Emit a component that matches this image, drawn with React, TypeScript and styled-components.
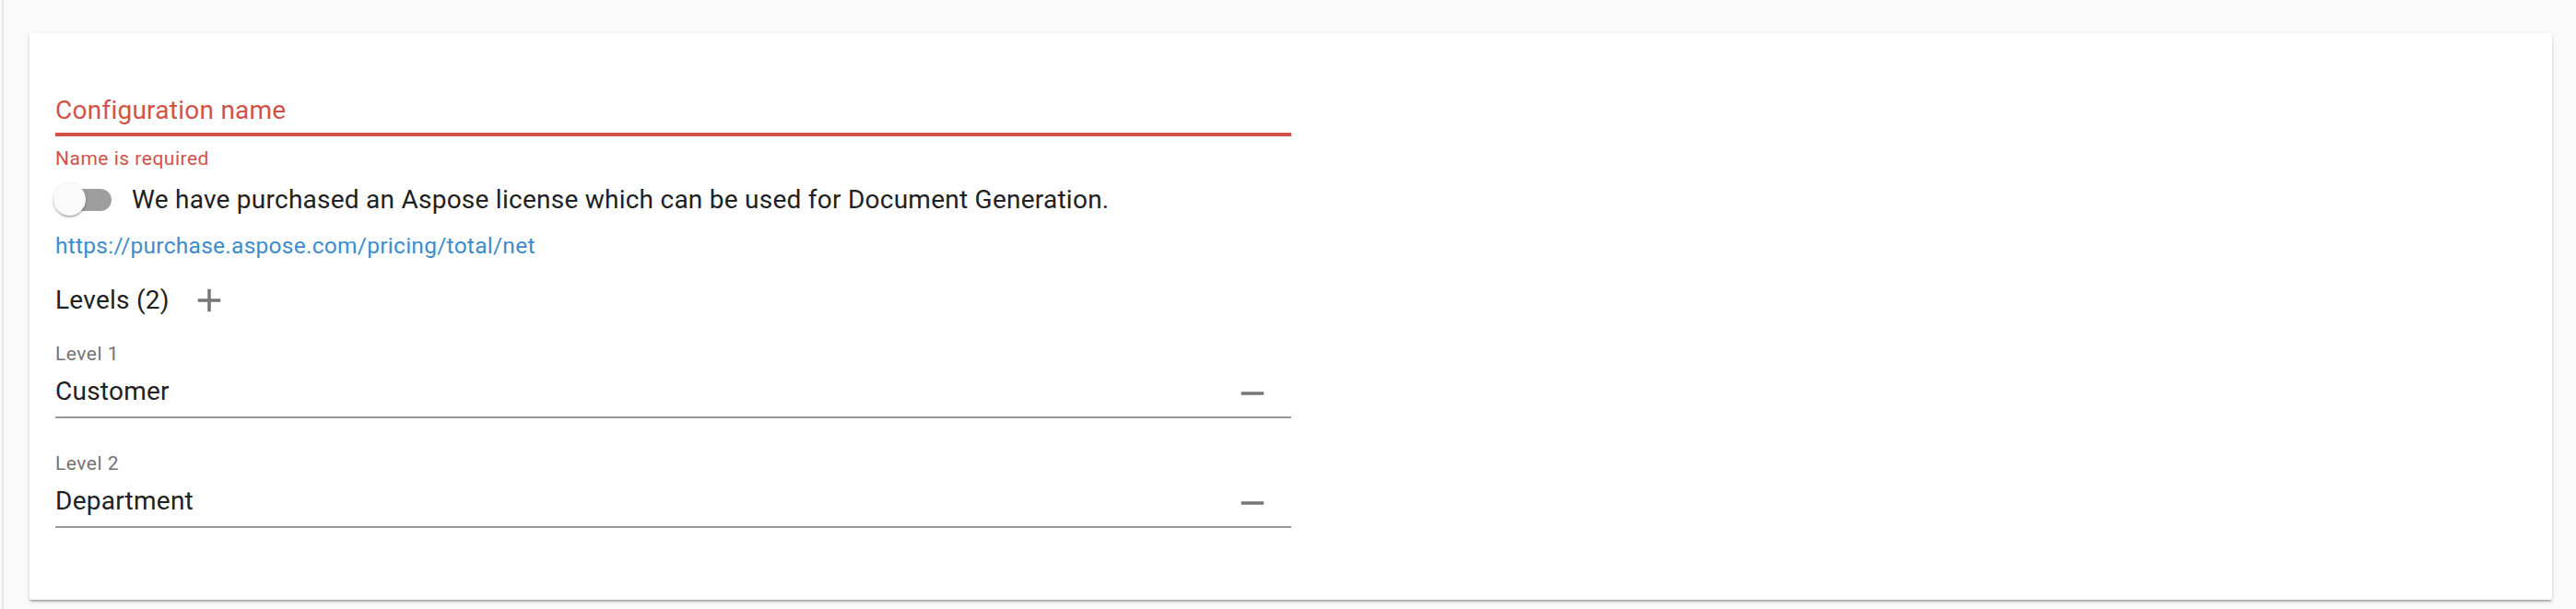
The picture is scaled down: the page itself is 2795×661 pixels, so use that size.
import React from 'react';
import styled, { createGlobalStyle } from 'styled-components';

const GlobalStyle = createGlobalStyle`
    html, body {
        margin: 0;
        padding: 0;
        background: #fafafa;
        font-family: Roboto, "Noto Sans", "Liberation Sans", sans-serif;
    }
`;

const Colors = {
    TEXT: '#212121',
    MUTED: '#757575',
    ICON: '#767676',
    WARN: '#d2514a',
    LINK: '#3d8ccc',
    LINE: '#989898',
};

// the reference renders a touch wider than Roboto does here
const BODY_SPACING = '0.25px';
const SMALL_SPACING = '0.5px';

const Page = styled.div`
    display: flex;
    min-height: 661px;
    background: #fafafa;
`;

const Rail = styled.div`
    width: 2px;
    margin-left: 2px;
    background: #e6e6e6;
    flex-shrink: 0;
`;

const Content = styled.main`
    flex: 1;
    padding: 36px 26px 12px 28px;
`;

const Card = styled.section`
    background: #fff;
    border-radius: 2px;
    padding: 68px 28px 78px 28px;
    box-shadow: 0 3px 2px -2px rgba(0, 0, 0, 0.2), 0 2px 2px 0 rgba(0, 0, 0, 0.14),
        0 2px 5px 0 rgba(0, 0, 0, 0.12);
`;

const Form = styled.div`
    width: 50%;
    display: flex;
    flex-direction: column;
`;

const FloatingLabel = styled.div<{ $error?: boolean }>`
    font-size: 28px;
    line-height: 32px;
    letter-spacing: ${BODY_SPACING};
    color: ${p => (p.$error ? Colors.WARN : Colors.MUTED)};
    margin-bottom: 8px;
`;

const Underline = styled.div<{ $error?: boolean }>`
    height: ${p => (p.$error ? '4px' : '2px')};
    background: ${p => (p.$error ? Colors.WARN : Colors.LINE)};
`;

const ErrorText = styled.div`
    font-size: 21px;
    line-height: 24px;
    letter-spacing: ${SMALL_SPACING};
    color: ${Colors.WARN};
    margin-top: 12px;
`;

const ToggleRow = styled.label`
    display: flex;
    align-items: center;
    height: 35px;
    margin-top: 15px;
    margin-left: -2px;
    cursor: pointer;
`;

const Track = styled.span`
    position: relative;
    width: 63px;
    height: 24px;
    border-radius: 12px;
    background: #9e9e9e;
    flex-shrink: 0;
`;

const Thumb = styled.span`
    position: absolute;
    left: 0;
    top: -5.5px;
    width: 35px;
    height: 35px;
    border-radius: 50%;
    background: #fafafa;
    box-shadow: 0 3px 2px -2px rgba(0, 0, 0, 0.2), 0 2px 2px 0 rgba(0, 0, 0, 0.14),
        0 1px 5px 0 rgba(0, 0, 0, 0.12);
`;

const ToggleText = styled.span`
    font-size: 28px;
    line-height: 32px;
    letter-spacing: ${BODY_SPACING};
    color: ${Colors.TEXT};
    margin-left: 22px;
`;

const Link = styled.a`
    display: block;
    font-size: 24.5px;
    line-height: 28px;
    letter-spacing: 0.27px;
    color: ${Colors.LINK};
    text-decoration: none;
    margin-top: 19px;
`;

const LevelsHeader = styled.div`
    display: flex;
    align-items: center;
    height: 42px;
    margin-top: 24px;
`;

const HeaderText = styled.span`
    font-size: 28px;
    line-height: 32px;
    letter-spacing: ${BODY_SPACING};
    color: ${Colors.TEXT};
`;

const IconButton = styled.button<{ $gap?: number }>`
    width: 42px;
    height: 42px;
    padding: 0;
    border: none;
    background: transparent;
    display: flex;
    align-items: center;
    justify-content: center;
    margin-left: ${p => p.$gap ?? 0}px;
    cursor: pointer;
    flex-shrink: 0;
`;

const LevelField = styled.div`
    display: flex;
    flex-direction: column;
    margin-top: 25px;

    & + & {
        margin-top: 37px;
    }
`;

const SmallLabel = styled.div`
    font-size: 21px;
    line-height: 24px;
    letter-spacing: ${SMALL_SPACING};
    color: ${Colors.MUTED};
`;

const InputRow = styled.div`
    display: flex;
    align-items: center;
    height: 32px;
    margin-top: 13px;
    margin-bottom: 11px;
`;

const InputValue = styled.span`
    flex: 1;
    font-size: 28px;
    line-height: 32px;
    letter-spacing: ${BODY_SPACING};
    color: ${Colors.TEXT};
`;

const RemoveButton = styled(IconButton)`
    margin-right: 21px;
    margin-top: 3px;
`;

const AddIcon = () => (
    <svg width="42" height="42" viewBox="0 0 24 24" fill={Colors.ICON}>
        <path d="M19 13h-6v6h-2v-6H5v-2h6V5h2v6h6v2z" />
    </svg>
);

const RemoveIcon = () => (
    <svg width="42" height="42" viewBox="0 0 24 24" fill={Colors.ICON}>
        <path d="M19 13H5v-2h14v2z" />
    </svg>
);

const levels = ['Customer', 'Department'];

export default function App() {
    return (
        <>
            <GlobalStyle />
            <Page>
                <Rail />
                <Content>
                    <Card>
                        <Form>
                            <FloatingLabel $error>Configuration name</FloatingLabel>
                            <Underline $error />
                            <ErrorText>Name is required</ErrorText>
                            <ToggleRow>
                                <Track>
                                    <Thumb />
                                </Track>
                                <ToggleText>
                                    We have purchased an Aspose license which can be used for Document Generation.
                                </ToggleText>
                            </ToggleRow>
                            <Link href="#">https://purchase.aspose.com/pricing/total/net</Link>
                            <LevelsHeader>
                                <HeaderText>Levels ({levels.length})</HeaderText>
                                <IconButton $gap={22} aria-label="Add level">
                                    <AddIcon />
                                </IconButton>
                            </LevelsHeader>
                            {levels.map((value, i) => (
                                <LevelField key={value}>
                                    <SmallLabel>Level {i + 1}</SmallLabel>
                                    <InputRow>
                                        <InputValue>{value}</InputValue>
                                        <RemoveButton aria-label="Remove level">
                                            <RemoveIcon />
                                        </RemoveButton>
                                    </InputRow>
                                    <Underline />
                                </LevelField>
                            ))}
                        </Form>
                    </Card>
                </Content>
            </Page>
        </>
    );
}
